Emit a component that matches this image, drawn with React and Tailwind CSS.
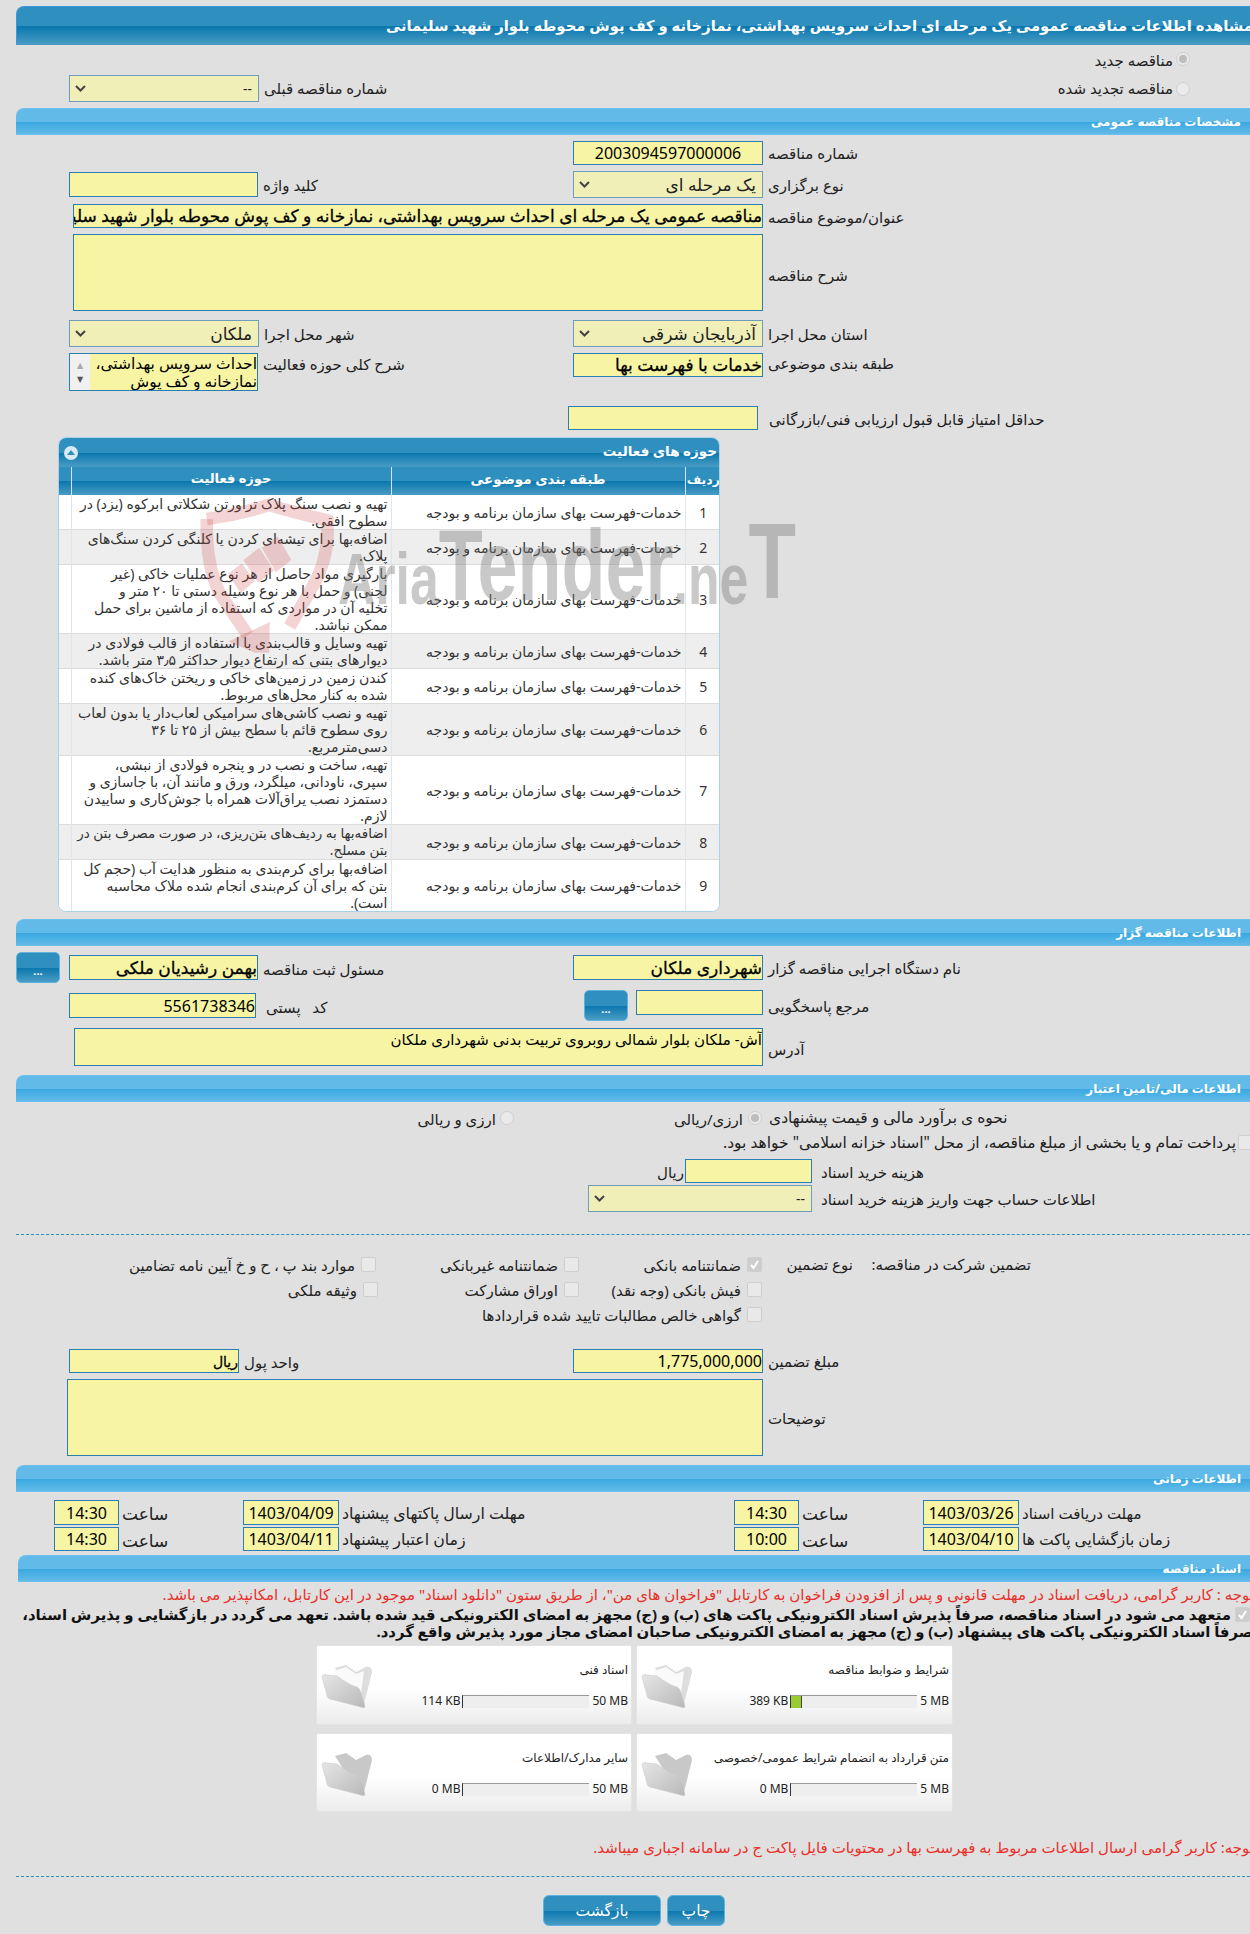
import React from "react";

const fieldCls = "border border-[#2a7fb0] bg-[#f7f5a4] text-black overflow-hidden whitespace-nowrap";
const barBg = "bg-[linear-gradient(#62bae8_0%,#62bae8_50%,#39a8e0_52%,#62bae8_100%)]";
const darkBg = "bg-[linear-gradient(#2f90bf_0%,#2f90bf_50%,#0a77ae_51%,#4a9cc4_100%)]";

const rows = [
  ["تهیه و نصب سنگ پلاک تراورتن شکلاتی ابرکوه (یزد) در", "سطوح افقی."],
  ["اضافه‌بها برای تیشه‌ای کردن یا کلنگی کردن سنگ‌های", "پلاک."],
  ["بارگیری مواد حاصل از هر نوع عملیات خاکی (غیر", "لجنی) و حمل با هر نوع وسیله دستی تا ۲۰ متر و", "تخلیه آن در مواردی که استفاده از ماشین برای حمل", "ممکن نباشد."],
  ["تهیه وسایل و قالب‌بندی با استفاده از قالب فولادی در", "دیوارهای بتنی که ارتفاع دیوار حداکثر ۳٫۵ متر باشد."],
  ["کندن زمین در زمین‌های خاکی و ریختن خاک‌های کنده", "شده به کنار محل‌های مربوط."],
  ["تهیه و نصب کاشی‌های سرامیکی لعاب‌دار یا بدون لعاب", "روی سطوح قائم با سطح بیش از ۲۵ تا ۳۶", "دسی‌مترمربع."],
  ["تهیه، ساخت و نصب در و پنجره فولادی از نبشی،", "سپری، ناودانی، میلگرد، ورق و مانند آن، با جاسازی و", "دستمزد نصب یراق‌آلات همراه با جوش‌کاری و ساییدن", "لازم."],
  ["اضافه‌بها به ردیف‌های بتن‌ریزی، در صورت مصرف بتن در", "بتن مسلح."],
  ["اضافه‌بها برای کرم‌بندی به منظور هدایت آب (حجم کل", "بتن که برای آن کرم‌بندی انجام شده ملاک محاسبه", "است)."],
];

const SectionBar = ({ title, className = "" }) => (
  <div className={`h-[27px] ml-[16px] mr-[-10px] rounded-t-[8px] border-y border-[#6cc0ee] ${barBg} flex items-center justify-end pr-[19px] ${className}`}>
    <span dir="rtl" className="text-white text-[12px] font-bold whitespace-nowrap">{title}</span>
  </div>
);

const Label = ({ children, className = "", size = "text-[15px]" }) => (
  <span dir="rtl" className={`${size} leading-none pt-[2px] text-[#222] whitespace-nowrap ${className}`}>{children}</span>
);

const Chevron = () => (
  <svg width="11" height="7" viewBox="0 0 11 7" className="shrink-0">
    <path d="M1 1l4.5 4.5L10 1" fill="none" stroke="#444" strokeWidth="2" />
  </svg>
);

const Select = ({ value, small = false, className = "" }) => (
  <div className={`border border-[#6f9cb8] bg-[#f0efb7] flex items-center justify-between pl-[5px] pr-[6px] h-full ${className}`}>
    <Chevron />
    <span dir="rtl" className={`${small ? "text-[14px]" : "text-[17px]"} text-[#222] whitespace-nowrap`}>{value}</span>
  </div>
);

const Field = ({ children, className = "", size = "text-[16px]", strong = false }) => (
  <div dir="rtl" className={`${fieldCls} h-full flex items-center ${size} ${strong ? "[-webkit-text-stroke:0.3px_#000]" : ""} ${className}`}>
    {children}
  </div>
);

const Radio = ({ checked = false }) => (
  <span className="w-[14px] h-[14px] rounded-full border border-[#cfcfcf] bg-[#eaeaea] flex items-center justify-center shrink-0">
    {checked && <span className="w-[8px] h-[8px] rounded-full bg-[#bdbdbd]" />}
  </span>
);

const Check = ({ checked = false, className = "" }) => (
  <span className={`w-[15px] h-[15px] rounded-[2px] border border-[#cfcfcf] flex items-center justify-center shrink-0 ${checked ? "bg-[#cdcdcd]" : "bg-[#e9e9e9]"} ${className}`}>
    {checked && (
      <svg width="11" height="11" viewBox="0 0 11 11">
        <path d="M2 6l2.5 3L9 2" fill="none" stroke="#fff" strokeWidth="2" />
      </svg>
    )}
  </span>
);

// one form row: left half starts at x=69, right half has its input ending at x=763
const Row = ({ h, mt, left, right, label }) => (
  <div className={`flex ${h} ${mt}`}>
    <div className="w-[500px] pl-[69px] flex h-full">{left}</div>
    <div className="w-[263px] flex justify-end h-full">{right}</div>
    {label && <div className="flex items-center ml-[5px]"><Label className="-mt-[1px]">{label}</Label></div>}
  </div>
);

const MoreBtn = ({ className = "" }) => (
  <div className={`rounded-[5px] border border-[#5db3e0] ${darkBg} text-white text-[11px] font-bold flex items-center justify-center pt-[8px] ${className}`}>...</div>
);

const Folder = ({ paper }) => (
  <svg width="54" height="48" viewBox="0 0 54 48" className="shrink-0">
    <defs>
      <linearGradient id="fold" x1="0" y1="0" x2="1" y2="1">
        <stop offset="0" stopColor="#e6e6e6" />
        <stop offset="1" stopColor="#b8b8b8" />
      </linearGradient>
    </defs>
    <path d="M15 6 L26 3 L36 10 L46 5 C50 4 52 6 52 10 L44 42 C43 45 42 46 40 45 Z" fill={paper ? "#dddddd" : "#c8c8c8"} />
    {paper && <path d="M14 9 L26 5 L36 12 L44 9 L41 32 L20 24 Z" fill="#fafafa" />}
    <path d="M2 15 C2 13 4 12 7 13 L17 14 C22 18 32 24 37 25 C39 26 40 28 41 31 L45 44 C45 46 43 46 41 45 L10 37 C8 36 7 35 7 33 Z" fill="url(#fold)" stroke="#c4c4c4" strokeWidth="0.5" />
  </svg>
);

const DocCard = ({ title, size, max, fill = 0, paper }) => (
  <div className="rounded-[2px] border border-[#e4e4e4] bg-[linear-gradient(#ffffff_0%,#ffffff_55%,#ececec_100%)] flex pl-[3px] h-full">
    <div className="pt-[16px]"><Folder paper={paper} /></div>
    <div className="flex-1 flex flex-col pr-[3px]">
      <div dir="rtl" className="text-[12px] text-[#222] whitespace-nowrap mt-[17px] h-[14px] leading-[14px]">{title}</div>
      <div className="flex justify-end items-center mt-[17px] text-[12px] text-[#222] whitespace-nowrap h-[14px]">
        <span>{size}</span>
        <div className="w-[127px] h-[13px] mx-[2px] bg-[#eeeeee] border-t border-t-[#999] border-l border-l-[#333] flex">
          {fill > 0 && <div className="h-full bg-[#99cc33] border-r border-r-[#444]" style={{ width: fill }} />}
        </div>
        <span className="ml-[1px]">{max}</span>
      </div>
    </div>
  </div>
);

const Watermark = () => (
  <div className="absolute left-[190px] top-[495px] pointer-events-none flex items-start">
    <svg width="168" height="158" viewBox="0 0 480 450" className="shrink-0">
      <g fill="none" stroke="#cd4646" strokeOpacity="0.24" strokeWidth="36">
        <path d="M48 68 Q140 55 225 28 Q320 55 392 72 Q400 180 345 270 L285 375" />
        <path d="M48 68 Q45 200 85 280 L165 400" />
      </g>
      <g fill="#cd4646" fillOpacity="0.24">
        <path d="M110 418 L228 362 L226 450 L185 450 Z" />
        <path d="M108 225 L148 195 L185 245 L145 280 Z" />
        <path d="M153 185 L198 150 L240 215 L195 250 Z" />
        <path d="M205 150 L250 118 L290 185 L245 220 Z" />
      </g>
    </svg>
    <div dir="ltr" className="-ml-[20px] mt-[34px] h-[86px] origin-left scale-x-[0.72] flex items-end [font-family:'Liberation_Sans',sans-serif] font-bold text-[#787878]/40 whitespace-nowrap leading-none">
      <span className="text-[72px]">Aria</span>
      <span className="text-[100px]">Tender</span>
      <span className="text-[72px]">.ne</span>
      <span className="text-[108px]">T</span>
    </div>
  </div>
);

export default function App() {
  return (
    <div className="relative w-[1250px] h-[1934px] overflow-hidden bg-[#e0e0e0] [font-family:'Noto_Sans','DejaVu_Sans',sans-serif]">
      <div className="pt-[6px]">
        <div className={`h-[39px] ml-[16px] mr-[-10px] rounded-t-[8px] border-x border-t border-[#3d97dc] ${darkBg} flex items-center justify-end pr-[6px] pb-[2px] overflow-hidden`}>
          <span dir="rtl" className="text-white text-[14.8px] font-bold whitespace-nowrap">
            مشاهده اطلاعات مناقصه عمومی یک مرحله ای احداث سرویس بهداشتی، نمازخانه و کف پوش محوطه بلوار شهید سلیمانی
          </span>
        </div>

        <div className="flex justify-end items-center h-[14px] mt-[7px] pr-[60px]">
          <Label>مناقصه جدید</Label>
          <span className="ml-[3px]"><Radio checked /></span>
        </div>
        <div className="flex h-[27px] mt-[9px] pr-[60px]">
          <div className="w-[259px] pl-[69px] h-full"><Select value="--" small /></div>
          <div className="flex items-center ml-[5px]"><Label className="-mt-[2px]">شماره مناقصه قبلی</Label></div>
          <div className="flex-1 flex justify-end items-center">
            <Label className="-mt-[2px]">مناقصه تجدید شده</Label>
            <span className="ml-[3px]"><Radio /></span>
          </div>
        </div>

        <SectionBar title="مشخصات مناقصه عمومی" className="mt-[6px]" />

        <Row h="h-[24px]" mt="mt-[6px]" label="شماره مناقصه"
          right={<Field className="w-[190px] justify-center">2003094597000006</Field>} />
        <Row h="h-[27px]" mt="mt-[6px]" label="نوع برگزاری"
          left={<div className="flex h-full items-center"><div className="w-[189px] h-[25px]"><Field /></div><Label className="ml-[5px]">کلید واژه</Label></div>}
          right={<Select value="یک مرحله ای" className="w-[190px]" />} />
        <div className="flex h-[24px] mt-[6px]">
          <div className="ml-[73px] w-[690px] h-full">
            <Field strong size="text-[17px]">مناقصه عمومی یک مرحله ای احداث سرویس بهداشتی، نمازخانه و کف پوش محوطه بلوار شهید سلیمانی</Field>
          </div>
          <div className="flex items-center ml-[5px]"><Label>عنوان/موضوع مناقصه</Label></div>
        </div>
        <div className="flex h-[77px] mt-[6px]">
          <div className={`ml-[73px] w-[690px] h-full ${fieldCls}`} />
          <div className="flex items-center ml-[5px]"><Label className="mt-[4px]">شرح مناقصه</Label></div>
        </div>
        <Row h="h-[27px]" mt="mt-[9px]" label="استان محل اجرا"
          left={<div className="flex h-full items-center"><div className="w-[190px] h-full"><Select value="ملکان" /></div><Label className="ml-[5px]">شهر محل اجرا</Label></div>}
          right={<Select value="آذربایجان شرقی" className="w-[190px]" />} />
        <div className="flex h-[38px] mt-[6px]">
          <div className="w-[500px] pl-[69px] flex h-full items-start">
            <div className={`w-[189px] h-[38px] ${fieldCls} flex`}>
              <div className="w-[20px] bg-[#f0f0f0] flex flex-col items-center justify-center gap-[6px] text-[8px] leading-none text-[#555] shrink-0">
                <span className="text-[#aaa]">▲</span><span>▼</span>
              </div>
              <div dir="rtl" className="flex-1 text-[15.5px] leading-[18px] whitespace-nowrap overflow-hidden">
                احداث سرویس بهداشتی،<br />نمازخانه و کف پوش
              </div>
            </div>
            <Label className="ml-[5px] mt-[2px]">شرح کلی حوزه فعالیت</Label>
          </div>
          <div className="w-[263px] flex justify-end h-[24px]">
            <Field strong size="text-[17px]" className="w-[190px]">خدمات با فهرست بها</Field>
          </div>
          <Label className="ml-[5px] mt-[1px]">طبقه بندی موضوعی</Label>
        </div>
        <div className="flex h-[24px] mt-[15px]">
          <div className={`ml-[568px] w-[190px] h-full ${fieldCls}`} />
          <div className="flex items-center ml-[11px]"><Label>حداقل امتیاز قابل قبول ارزیابی فنی/بازرگانی</Label></div>
        </div>

        <div className="ml-[58px] w-[662px] h-[475px] mt-[7px] rounded-[8px] overflow-hidden border border-[#a8d2ea] bg-white">
          <div className={`h-[29px] ${darkBg} flex items-center justify-between pl-[5px] pr-[2px]`}>
            <span className="w-[14px] h-[14px] rounded-full bg-[#d6e9f5] flex items-center justify-center">
              <span className="w-0 h-0 border-x-[4px] border-x-transparent border-b-[5px] border-b-[#2f90bf]" />
            </span>
            <span dir="rtl" className="text-white text-[13.5px] font-bold pb-[2px]">حوزه های فعالیت</span>
          </div>
          <table dir="rtl" className="w-full table-fixed border-collapse text-[#333]">
            <colgroup>
              <col className="w-[36px]" />
              <col className="w-[294px]" />
              <col className="w-[320px]" />
              <col className="w-[12px]" />
            </colgroup>
            <thead className={darkBg}>
              <tr className="h-[28px] text-white text-[13.5px] font-bold">
                <th className="border-l border-[#d5e6f0] font-bold text-[12.5px] pb-[2px]">ردیف</th>
                <th className="border-l border-[#d5e6f0] font-bold pb-[4px]">طبقه بندی موضوعی</th>
                <th className="border-l border-[#d5e6f0] font-bold text-[13px] pb-[4px]">حوزه فعالیت</th>
                <th />
              </tr>
            </thead>
            <tbody className="text-[14px]">
              {rows.map((lines, i) => (
                <tr key={i} className={`border-b border-[#dcdcdc] ${i % 2 === 1 ? "bg-[#eeeeee]" : "bg-white"}`}>
                  <td className="border-l border-[#dde6ea] text-center text-[14px] [font-family:'Noto_Sans',sans-serif]">{i + 1}</td>
                  <td className="border-l border-[#dde6ea] pr-[3px] whitespace-nowrap">خدمات-فهرست بهای سازمان برنامه و بودجه</td>
                  <td className={`border-l border-[#dde6ea] pr-[3px] leading-[17px] whitespace-nowrap ${i === 7 ? "text-[13.5px]" : ""}`}>
                    {lines.map((line, j) => <div key={j}>{line}</div>)}
                  </td>
                  <td />
                </tr>
              ))}
            </tbody>
          </table>
        </div>

        <SectionBar title="اطلاعات مناقصه گزار" className="mt-[7px]" />

        <div className="flex h-[31px] mt-[6px]">
          <MoreBtn className="ml-[16px] w-[44px] h-full" />
          <div className="w-[440px] pl-[9px] flex h-full pt-[3px]">
            <div className="w-[189px] h-[25px]"><Field strong size="text-[17px]">بهمن رشیدیان ملکی</Field></div>
            <Label className="ml-[5px] mt-[5px]">مسئول ثبت مناقصه</Label>
          </div>
          <div className="w-[263px] flex justify-end h-[25px] mt-[3px]">
            <Field strong size="text-[17px]" className="w-[190px]">شهرداری ملکان</Field>
          </div>
          <Label className="ml-[5px] mt-[7px]">نام دستگاه اجرایی مناقصه گزار</Label>
        </div>
        <div className="flex h-[31px] mt-[7px]">
          <div className="w-[500px] pl-[69px] flex h-full pt-[3px]">
            <div className="w-[187px] h-[25px]"><Field>5561738346</Field></div>
            <Label className="ml-[10px] mt-[5px]">کد&nbsp;&nbsp;&nbsp;پستی</Label>
          </div>
          <div className="w-[263px] flex justify-end h-full">
            <MoreBtn className="w-[44px] h-full mr-[8px]" />
            <div className="w-[127px] h-[25px]"><Field /></div>
          </div>
          <Label className="ml-[5px] mt-[7px]">مرجع پاسخگویی</Label>
        </div>
        <div className="flex h-[38px] mt-[7px]">
          <div dir="rtl" className={`ml-[74px] w-[689px] h-full ${fieldCls} text-[15px] leading-[20px] text-[#222]`}>
            آش- ملکان بلوار شمالی روبروی تربیت بدنی شهرداری ملکان
          </div>
          <div className="flex items-center ml-[5px]"><Label className="mt-[2px]">آدرس</Label></div>
        </div>

        <SectionBar title="اطلاعات مالی/تامین اعتبار" className="mt-[9px]" />

        <div className="flex h-[18px] mt-[7px] items-center">
          <div className="w-[420px]" />
          <div className="w-[94px] flex justify-end items-center">
            <Label>ارزی و ریالی</Label>
            <span className="ml-[4px]"><Radio /></span>
          </div>
          <div className="w-[248px] flex justify-end items-center">
            <Label>ارزی/ریالی</Label>
            <span className="ml-[5px]"><Radio checked /></span>
          </div>
          <Label size="text-[15.5px]" className="ml-[7px] -mt-[3px]">نحوه ی برآورد مالی و قیمت پیشنهادی</Label>
        </div>
        <div className="flex justify-end h-[18px] mt-[6px] items-center -mr-[3px]">
          <Label size="text-[15.5px]">پرداخت تمام و یا بخشی از مبلغ مناقصه، از محل "اسناد خزانه اسلامی" خواهد بود.</Label>
          <Check className="ml-[2px]" />
        </div>
        <div className="flex h-[24px] mt-[8px] items-center">
          <div className="w-[685px] flex justify-end"><Label className="mr-[1px]">ریال</Label></div>
          <div className="w-[127px] h-full"><Field /></div>
          <Label className="ml-[9px]">هزینه خرید اسناد</Label>
        </div>
        <div className="flex h-[27px] mt-[2px] items-center">
          <div className="ml-[588px] w-[224px] h-full"><Select value="--" small /></div>
          <Label className="ml-[9px]">اطلاعات حساب جهت واریز هزینه خرید اسناد</Label>
        </div>

        <div className="ml-[16px] mt-[22px] border-t border-dashed border-[#2f8fc0]" />

        <div dir="rtl" className="pr-[219px] mt-[16px] flex flex-col">
          <div className="flex h-[26px] items-center">
            <div className="w-[178px]"><Label>تضمین شرکت در مناقصه:</Label></div>
            <div className="w-[91px]"><Label>نوع تضمین</Label></div>
            <div className="w-[183px] flex items-center gap-[6px]"><Check checked /><Label>ضمانتنامه بانکی</Label></div>
            <div className="w-[203px] flex items-center gap-[6px]"><Check /><Label>ضمانتنامه غیربانکی</Label></div>
            <div className="flex items-center gap-[6px]"><Check /><Label>موارد بند پ ، ح و خ آیین نامه تضامین</Label></div>
          </div>
          <div className="flex h-[25px] items-center">
            <div className="w-[269px]" />
            <div className="w-[183px] flex items-center gap-[6px]"><Check /><Label>فیش بانکی (وجه نقد)</Label></div>
            <div className="w-[201px] flex items-center gap-[6px]"><Check /><Label>اوراق مشارکت</Label></div>
            <div className="flex items-center gap-[6px]"><Check /><Label>وثیقه ملکی</Label></div>
          </div>
          <div className="flex h-[25px] items-center">
            <div className="w-[269px]" />
            <div className="flex items-center gap-[6px]"><Check /><Label>گواهی خالص مطالبات تایید شده قراردادها</Label></div>
          </div>
        </div>

        <Row h="h-[24px]" mt="mt-[22px]" label="مبلغ تضمین"
          left={<div className="flex h-full items-center"><div className="w-[170px] h-full"><Field strong size="text-[14px]">ریال</Field></div><Label className="ml-[5px]">واحد پول</Label></div>}
          right={<Field className="w-[190px]">1,775,000,000</Field>} />
        <div className="flex h-[77px] mt-[6px]">
          <div className={`ml-[67px] w-[696px] h-full ${fieldCls}`} />
          <div className="flex items-center ml-[5px]"><Label>توضیحات</Label></div>
        </div>

        <SectionBar title="اطلاعات زمانی" className="mt-[9px]" />

        <div className="flex h-[25px] mt-[8px] pl-[54px] items-center">
          <div className="w-[189px] flex items-center h-full">
            <div className="w-[65px] h-full"><Field className="justify-center">14:30</Field></div>
            <Label size="text-[17px]" className="ml-[3px]">ساعت</Label>
          </div>
          <div className="w-[491px] flex items-center h-full">
            <div className="w-[96px] h-full"><Field className="justify-center">1403/04/09</Field></div>
            <Label size="text-[15.8px]" className="ml-[3px]">مهلت ارسال پاکتهای پیشنهاد</Label>
          </div>
          <div className="w-[189px] flex items-center h-full">
            <div className="w-[65px] h-full"><Field className="justify-center">14:30</Field></div>
            <Label size="text-[17px]" className="ml-[3px]">ساعت</Label>
          </div>
          <div className="flex items-center h-full">
            <div className="w-[96px] h-full"><Field className="justify-center">1403/03/26</Field></div>
            <Label className="ml-[3px]">مهلت دریافت اسناد</Label>
          </div>
        </div>
        <div className="flex h-[24px] mt-[2px] pl-[54px] items-center">
          <div className="w-[189px] flex items-center h-full">
            <div className="w-[65px] h-full"><Field className="justify-center">14:30</Field></div>
            <Label size="text-[17px]" className="ml-[3px]">ساعت</Label>
          </div>
          <div className="w-[491px] flex items-center h-full">
            <div className="w-[96px] h-full"><Field className="justify-center">1403/04/11</Field></div>
            <Label size="text-[15.8px]" className="ml-[3px]">زمان اعتبار پیشنهاد</Label>
          </div>
          <div className="w-[189px] flex items-center h-full">
            <div className="w-[65px] h-full"><Field className="justify-center">10:00</Field></div>
            <Label size="text-[17px]" className="ml-[3px]">ساعت</Label>
          </div>
          <div className="flex items-center h-full">
            <div className="w-[96px] h-full"><Field className="justify-center">1403/04/10</Field></div>
            <Label size="text-[15.5px]" className="ml-[3px]">زمان بازگشایی پاکت ها</Label>
          </div>
        </div>

        <SectionBar title="اسناد مناقصه" className="mt-[4px] ml-[18px]" />

        <div className="flex justify-end h-[18px] mt-[3px] items-center -mr-[4px]">
          <span dir="rtl" className="text-[15px] text-[#e8312a] whitespace-nowrap">
            توجه : کاربر گرامی، دریافت اسناد در مهلت قانونی و پس از افزودن فراخوان به کارتابل "فراخوان های من"، از طریق ستون "دانلود اسناد" موجود در این کارتابل، امکانپذیر می باشد.
          </span>
        </div>
        <div className="flex justify-end items-center h-[17px] mt-[3px]">
          <span dir="rtl" className="text-[14.9px] font-bold text-[#111] whitespace-nowrap">
            متعهد می شود در اسناد مناقصه، صرفاً پذیرش اسناد الکترونیکی پاکت های (ب) و (ج) مجهز به امضای الکترونیکی قید شده باشد. تعهد می گردد در بازگشایی و پذیرش اسناد،
          </span>
          <Check checked className="ml-[4px]" />
        </div>
        <div className="flex justify-end items-center h-[17px] -mr-[3px]">
          <span dir="rtl" className="text-[14.8px] font-bold text-[#111] whitespace-nowrap">
            صرفاً اسناد الکترونیکی پاکت های پیشنهاد (ب) و (ج) مجهز به امضای الکترونیکی صاحبان امضای مجاز مورد پذیرش واقع گردد.
          </span>
        </div>

        <div className="ml-[316px] w-[637px] mt-[5px] grid grid-cols-[316px_317px] gap-x-[4px] gap-y-[8px]">
          <div className="h-[80px]"><DocCard title="اسناد فنی" size="114 KB" max="50 MB" paper /></div>
          <div className="h-[80px]"><DocCard title="شرایط و ضوابط مناقصه" size="389 KB" max="5 MB" fill={11} paper /></div>
          <div className="h-[79px]"><DocCard title="سایر مدارک/اطلاعات" size="0 MB" max="50 MB" /></div>
          <div className="h-[79px]"><DocCard title="متن قرارداد به انضمام شرایط عمومی/خصوصی" size="0 MB" max="5 MB" /></div>
        </div>

        <div className="flex justify-end h-[18px] mt-[26px] items-center -mr-[4px]">
          <span dir="rtl" className="text-[15px] text-[#e8312a] whitespace-nowrap">
            توجه: کاربر گرامی ارسال اطلاعات مربوط به فهرست بها در محتویات فایل پاکت ج در سامانه اجباری میباشد.
          </span>
        </div>

        <div className="ml-[16px] mt-[20px] border-t border-dashed border-[#2f8fc0]" />

        <div className="flex mt-[18px] ml-[543px] gap-[6px]">
          <div className={`w-[118px] h-[31px] rounded-[6px] border border-[#5db3e0] ${darkBg} text-white text-[15.5px] flex items-center justify-center`}>بازگشت</div>
          <div className={`w-[58px] h-[31px] rounded-[6px] border border-[#5db3e0] ${darkBg} text-white text-[15.5px] flex items-center justify-center`}>چاپ</div>
        </div>
      </div>

      <Watermark />
    </div>
  );
}
